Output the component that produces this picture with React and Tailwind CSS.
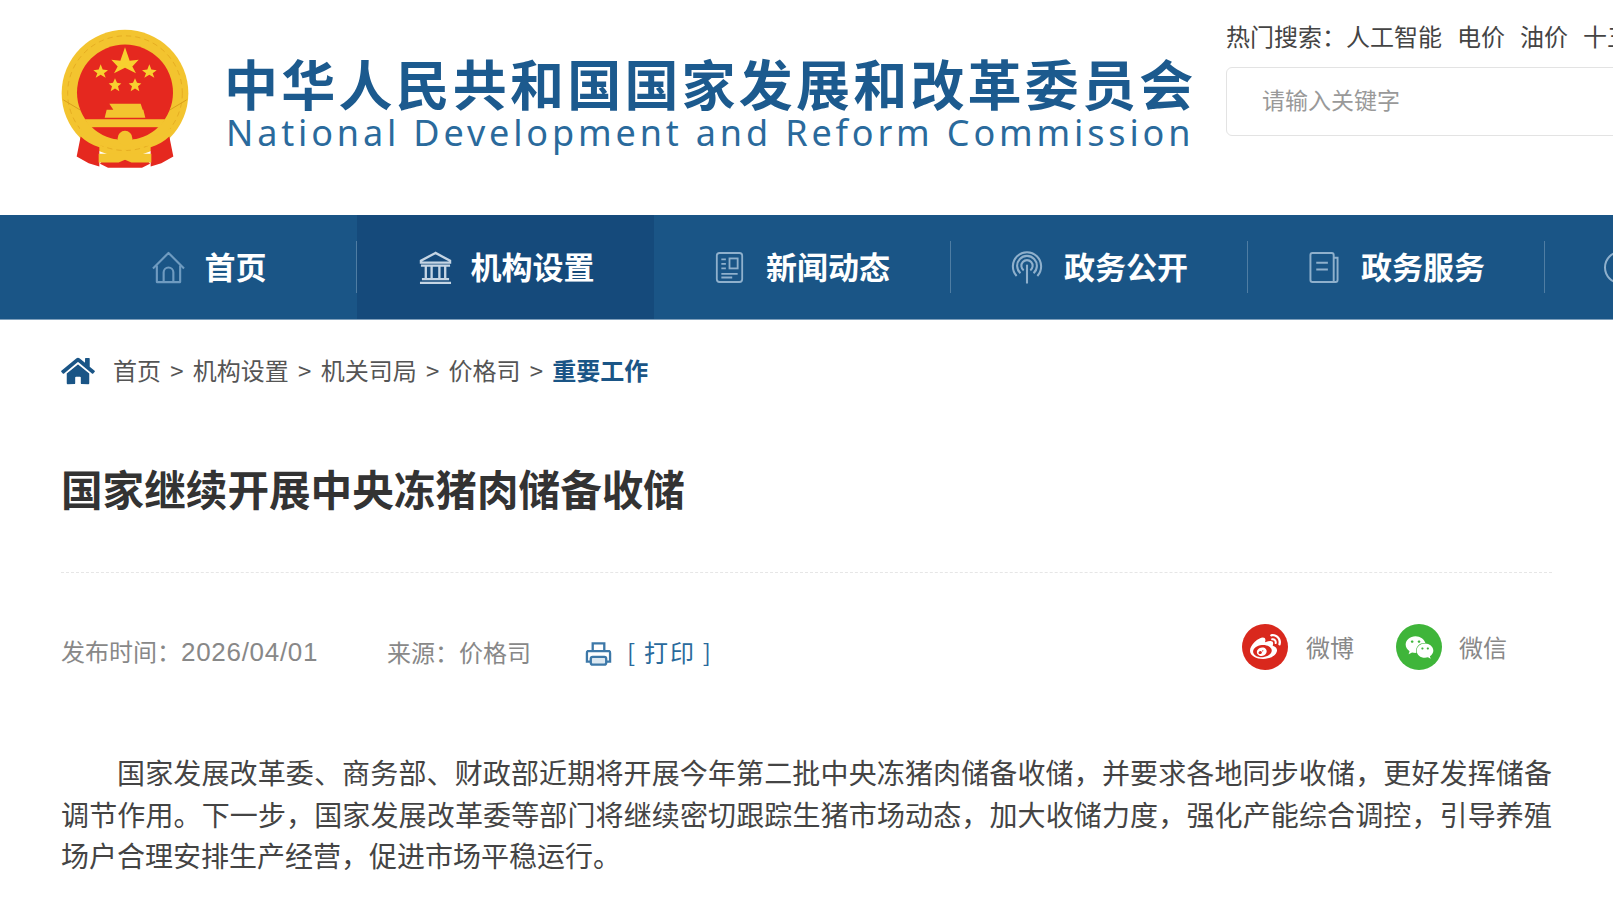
import React from 'react';
import { FaHome, FaWeibo, FaWeixin } from 'react-icons/fa';

const cjk = "font-['Noto_Sans_CJK_SC','Liberation_Sans',sans-serif]";

const Emblem = () => (
    <svg viewBox="60 55 390 425" className="w-[130px] h-[142px] shrink-0">
        <circle cx="255" cy="250" r="190" fill="#f3c42f" />
        <circle cx="255" cy="250" r="172" fill="none" stroke="#e6ad22" strokeWidth="3" strokeDasharray="16 12" />
        <path d="M70 270 120 300M440 270 390 300" stroke="#d99f1c" strokeWidth="3" />
        <circle cx="255" cy="248" r="144" fill="#e5281f" />
        <polygon points="255,112 269,153 296,150 277,170 288,190 255,174 222,190 233,170 214,150 241,153" fill="#f8d12f" />
        <polygon points="182,163 188,179 204,181 192,190 197,204 182,195 167,204 172,190 160,181 176,179" fill="#f8d12f" />
        <polygon points="328,163 334,179 350,181 338,190 343,204 328,195 313,204 318,190 306,181 322,179" fill="#f8d12f" />
        <polygon points="225,205 231,219 244,221 234,229 238,244 225,236 212,244 216,229 206,221 219,219" fill="#f8d12f" />
        <polygon points="285,205 291,219 304,221 294,229 298,244 285,236 272,244 276,229 266,221 279,219" fill="#f8d12f" />
        <path d="M208 282h94l6 18h-88zM200 300h110l6 24h-122z" fill="#f3c42f" />
        <path d="M135 328h240l-14 24h-212z" fill="#f3c42f" />
        <path d="M120 352c40 50 230 50 270 0v40c-40 26-230 26-270 0z" fill="#f3c42f" />
        <path d="M160 354h190c-20 18-50 26-95 28-45-2-75-10-95-28z" fill="#e5281f" />
        <circle cx="255" cy="385" r="22" fill="#f3c42f" />
        <path d="M122 380c14 14 34 26 56 32v58l-32-10-36-20z" fill="#e5281f" />
        <path d="M388 380c-14 14-34 26-56 32v58l32-10 36-20z" fill="#e5281f" />
        <path d="M190 448h130l10 14-24 12h-102l-24-12z" fill="#e5281f" />
        <path d="M176 432h60l19-12 19 12h60v26h-60l-19-8-19 8h-60z" fill="#f3c42f" />
    </svg>
);

const HomeIcon = () => (
    <svg viewBox="0 0 36 34" className="w-[35px] h-[33px]" fill="none" stroke="#6f9bc0" strokeWidth="2.2" strokeLinejoin="round">
        <path d="M2 18 18 2l16 16" />
        <path d="M6 15v17h24V15" />
        <path d="M13 32V22a5 5 0 0 1 10 0v10" />
    </svg>
);

const BankIcon = () => (
    <svg viewBox="0 0 36 34" className="w-[37px] h-[33px]" fill="none" stroke="#c5d5e4" strokeWidth="2.4">
        <path d="M18 2 3 10v2h30v-2z" />
        <path d="M3 15h30M8 15v13M14 15v13M22 15v13M28 15v13M4 29h28M2 33h32" />
    </svg>
);

const NewsIcon = () => (
    <svg viewBox="0 0 32 34" className="w-[29px] h-[33px]" fill="none" stroke="#8fb0cc" strokeWidth="2">
        <rect x="2" y="1" width="28" height="32" rx="3" />
        <path d="M7 8h5M7 13h5M7 18h5M7 24h18M7 28h12" />
        <rect x="16" y="7" width="9" height="11" />
    </svg>
);

const SignalIcon = () => (
    <svg viewBox="0 0 34 34" className="w-[32px] h-[33px]" fill="none" stroke="#8fb0cc" strokeWidth="2.2">
        <path d="M6 26A15 15 0 1 1 28 26" />
        <path d="M10 23A10.5 10.5 0 1 1 24 23" />
        <path d="M13.5 20A6 6 0 1 1 20.5 20" />
        <path d="M17 14v20" />
    </svg>
);

const DocIcon = () => (
    <svg viewBox="0 0 32 32" className="w-[32px] h-[31px]" fill="none" stroke="#8fb0cc" strokeWidth="2">
        <path d="M4 1h20a2 2 0 0 1 2 2v28H4a2 2 0 0 1-2-2V3a2 2 0 0 1 2-2z" />
        <path d="M26 6h4v23a2 2 0 0 1-2 2h-2" />
        <path d="M8 11h12M8 18h12" />
    </svg>
);

const PrinterIcon = () => (
    <svg viewBox="0 0 28 26" className="w-[27px] h-[26px] mt-[3px]" fill="none" stroke="#3d78a8" strokeWidth="2.4">
        <path d="M8 10V2h12v8" />
        <path d="M3 10h22a2 2 0 0 1 1 2v9H2v-9a2 2 0 0 1 1-2z" />
        <rect x="6" y="16" width="16" height="8" rx="2" fill="#dce8f1" />
    </svg>
);

const navItems = [
    { label: '首页', icon: <HomeIcon />, gap: 'gap-[19px]' },
    { label: '机构设置', icon: <BankIcon />, gap: 'gap-[17px]', active: true },
    { label: '新闻动态', icon: <NewsIcon />, gap: 'gap-[22px]' },
    { label: '政务公开', icon: <SignalIcon />, gap: 'gap-[21px]' },
    { label: '政务服务', icon: <DocIcon />, gap: 'gap-[21px]' },
];

const crumbs = ['首页', '机构设置', '机关司局', '价格司'];
const hotWords = ['人工智能', '电价', '油价', '十五五'];

const App = () => {
    return (
        <div className={`w-[1613px] h-[912px] overflow-hidden bg-white ${cjk}`}>
            <header className="h-[215px] flex pl-[60px] pt-[28px]">
                <Emblem />
                <div className="ml-[36px] w-[969px] shrink-0 pt-[25px]">
                    <div className="-ml-[2px] text-[54px] leading-[60px] font-bold tracking-[3.2px] whitespace-nowrap text-[#1c5a8e]">中华人民共和国国家发展和改革委员会</div>
                    <div className="font-['Noto_Sans',sans-serif] text-[36px] leading-[40px] tracking-[3.85px] whitespace-nowrap text-[#2a6a9c]">National Development and Reform Commission</div>
                </div>
                <div className="ml-[31px] w-[500px] shrink-0 -mt-[9px]">
                    <div className="flex gap-[15px] text-[24px] leading-[34px] text-[#444] whitespace-nowrap">
                        <span className="-mr-[16px] w-[121px]">热门搜索：</span>
                        {hotWords.map(w => <span key={w}>{w}</span>)}
                    </div>
                    <input
                        placeholder="请输入关键字"
                        className="mt-[14px] w-full h-[69px] pl-[35px] pb-[6px] border border-[#e3e3e3] rounded-[6px] text-[23px] outline-none placeholder:text-[#999]"
                    />
                </div>
            </header>

            <nav className="h-[105px] bg-[#1a5586] border-b border-[#7f9fbb] flex pl-[60px]">
                {navItems.map(item => (
                    <div
                        key={item.label}
                        className={`w-[297px] shrink-0 flex items-center justify-center relative ${item.gap} ${item.active ? 'bg-[#154a7b]' : ''}`}
                    >
                        {item.icon}
                        <span className="text-[31px] leading-none font-bold text-white whitespace-nowrap -mt-[3px]">{item.label}</span>
                        {!item.active && <span className="absolute right-0 top-[26px] h-[52px] w-px bg-[#4f7da3]" />}
                    </div>
                ))}
                <div className="shrink-0 flex items-center pl-[59px]">
                    <span className="w-[33px] h-[33px] rounded-full border-2 border-[#8fb0cc]" />
                </div>
            </nav>

            <div className="flex items-center pl-[61px] mt-[32px] h-[36px] text-[24px] text-[#555] whitespace-nowrap">
                <FaHome className="text-[#1a5586] w-[34px] h-[30px] mr-[18px] mt-[2px]" />
                {crumbs.map(c => (
                    <React.Fragment key={c}>
                        <span>{c}</span>
                        <span className="mx-[9.25px]">&gt;</span>
                    </React.Fragment>
                ))}
                <span className="font-bold text-[#1a5586]">重要工作</span>
            </div>

            <main className="mx-[61px]">
                <h1 className="mt-[72px] text-[41.6px] leading-[56px] font-bold text-[#333]">国家继续开展中央冻猪肉储备收储</h1>
                <div className="mt-[56px] border-t border-dashed border-[#e6e6e6]" />

                <div className="mt-[54px] h-[50px] flex items-center justify-between pr-[45px]">
                    <div className="flex items-center text-[24px] text-[#888] whitespace-nowrap">
                        <span className="w-[326px]">发布时间：<span className="font-['Liberation_Sans',sans-serif] text-[26px] tracking-[0.7px]">2026/04/01</span></span>
                        <span className="w-[198px]">来源：价格司</span>
                        <PrinterIcon />
                        <span className="ml-[15px] text-[#2a6a9c] tracking-[1.8px]">[ 打印 ]</span>
                    </div>
                    <div className="flex items-center text-[24px] text-[#888] -mt-[10px]">
                        <span className="w-[46px] h-[46px] rounded-full bg-[#d9281d] flex items-center justify-center">
                            <FaWeibo className="text-white w-[31px] h-[31px]" />
                        </span>
                        <span className="ml-[18px]">微博</span>
                        <span className="ml-[42px] w-[46px] h-[46px] rounded-full bg-[#3fb53a] flex items-center justify-center">
                            <FaWeixin className="text-white w-[29px] h-[29px]" />
                        </span>
                        <span className="ml-[17px]">微信</span>
                    </div>
                </div>

                <p className="mt-[75px] text-[28px] leading-[41.5px] text-[#444] indent-[56px] text-justify">
                    国家发展改革委、商务部、财政部近期将开展今年第二批中央冻猪肉储备收储，并要求各地同步收储，更好发挥储备调节作用。下一步，国家发展改革委等部门将继续密切跟踪生猪市场动态，加大收储力度，强化产能综合调控，引导养殖场户合理安排生产经营，促进市场平稳运行。
                </p>
            </main>
        </div>
    );
};

export default App;
